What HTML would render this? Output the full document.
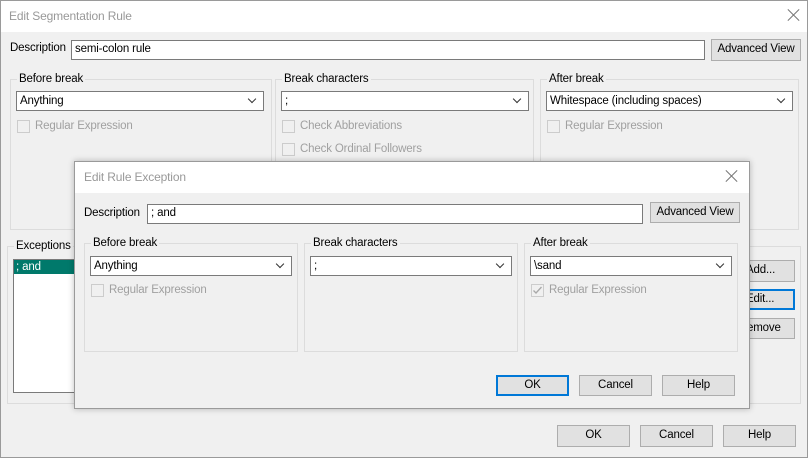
<!DOCTYPE html>
<html><head><style>
*{box-sizing:border-box;margin:0;padding:0}
body{width:808px;height:458px;background:#f0f0f0;position:relative;overflow:hidden;font-family:"Liberation Sans",sans-serif;font-size:11.5px;letter-spacing:-0.15px;color:#000}
.a{position:absolute;white-space:nowrap}
.win{border:1px solid #9a9a9a;background:#f0f0f0}
.tb{background:#fff;color:#999;font-size:12px;padding-left:8px;line-height:30px;height:31px}
.inp{background:#fff;border:1px solid #7a7a7a;padding-left:3px;line-height:17px;white-space:nowrap;overflow:hidden}
.btn{background:#e1e1e1;border:1px solid #adadad;text-align:center;line-height:19px}
.btn.f{border:2px solid #0078d7;line-height:17px}
.grp{border:1px solid #dcdcdc}
.lg{position:absolute;top:-8px;left:6px;background:#f0f0f0;padding:0 2px;line-height:14px}
.sel{background:#fff;border:1px solid #7a7a7a;padding-left:3px;line-height:18px}
.sel:after{content:"";position:absolute;right:8px;top:4px;width:5px;height:5px;border-right:1px solid #333;border-bottom:1px solid #333;transform:rotate(45deg)}
.cb{color:#a0a0a0;line-height:13px;padding-left:18px}
.cb:before{content:"";position:absolute;left:0;top:0;width:11px;height:11px;border:1px solid #ccc;background:#f0f0f0}
.x{position:absolute;width:14px;height:14px}
.x:before,.x:after{content:"";position:absolute;left:7px;top:-1px;width:1px;height:16px;background:#777}
.x:before{transform:rotate(45deg)}.x:after{transform:rotate(-45deg)}
</style></head><body>
<div class="a win" style="left:0;top:0;width:808px;height:458px">
<div class="tb">Edit Segmentation Rule</div>
</div>
<div class="x" style="left:786px;top:8px"></div>
<div class="a" style="left:10px;top:42px">Description</div>
<div class="a inp" style="left:71px;top:40px;width:634px;height:20px">semi-colon rule</div>
<div class="a btn" style="left:711px;top:39px;width:90px;height:22px">Advanced View</div>

<div class="a grp" style="left:10px;top:79px;width:262px;height:151px"><span class="lg">Before break</span></div>
<div class="a sel" style="left:16px;top:91px;width:248px;height:20px">Anything</div>
<div class="a cb" style="left:17px;top:120px">Regular Expression</div>

<div class="a grp" style="left:275px;top:79px;width:259px;height:151px"><span class="lg">Break characters</span></div>
<div class="a sel" style="left:281px;top:91px;width:248px;height:20px">;</div>
<div class="a cb" style="left:282px;top:120px">Check Abbreviations</div>
<div class="a cb" style="left:282px;top:143px">Check Ordinal Followers</div>

<div class="a grp" style="left:540px;top:79px;width:259px;height:151px"><span class="lg">After break</span></div>
<div class="a sel" style="left:546px;top:91px;width:247px;height:20px">Whitespace (including spaces)</div>
<div class="a cb" style="left:547px;top:120px">Regular Expression</div>

<div class="a grp" style="left:7px;top:246px;width:794px;height:158px"><span class="lg">Exceptions</span></div>
<div class="a" style="left:13px;top:259px;width:70px;height:134px;background:#fff;border:1px solid #7a7a7a"><div style="background:#00796b;color:#fff;line-height:14px;padding-left:2px">; and</div></div>
<div class="a btn" style="left:725px;top:260px;width:70px;height:22px;text-align:left;padding-left:20px">Add...</div>
<div class="a btn f" style="left:725px;top:289px;width:70px;height:21px;text-align:left;padding-left:19px">Edit...</div>
<div class="a btn" style="left:725px;top:318px;width:70px;height:21px;text-align:left;padding-left:21px">emove</div>

<div class="a btn" style="left:557px;top:425px;width:73px;height:22px">OK</div>
<div class="a btn" style="left:640px;top:425px;width:73px;height:22px">Cancel</div>
<div class="a btn" style="left:723px;top:425px;width:73px;height:22px">Help</div>

<div class="a win" style="left:74px;top:161px;width:676px;height:248px;box-shadow:0 0 6px rgba(0,0,0,.25)">
<div class="tb" style="line-height:30px;padding-left:9px">Edit Rule Exception</div>
</div>
<div class="x" style="left:724px;top:169px"></div>
<div class="a" style="left:84px;top:207px">Description</div>
<div class="a inp" style="left:147px;top:204px;width:496px;height:20px">; and</div>
<div class="a btn" style="left:650px;top:202px;width:90px;height:21px">Advanced View</div>

<div class="a grp" style="left:84px;top:243px;width:214px;height:109px"><span class="lg">Before break</span></div>
<div class="a sel" style="left:90px;top:256px;width:202px;height:20px">Anything</div>
<div class="a cb" style="left:91px;top:284px">Regular Expression</div>

<div class="a grp" style="left:304px;top:243px;width:214px;height:109px"><span class="lg">Break characters</span></div>
<div class="a sel" style="left:310px;top:256px;width:202px;height:20px">;</div>

<div class="a grp" style="left:524px;top:243px;width:214px;height:109px"><span class="lg">After break</span></div>
<div class="a sel" style="left:530px;top:256px;width:202px;height:20px">\sand</div>
<div class="a cb" style="left:531px;top:284px">Regular Expression</div>
<svg class="a" style="left:531px;top:284px" width="13" height="13"><path d="M2.5 6.5 L5 9 L10.5 3" fill="none" stroke="#a8a8a8" stroke-width="1.3"/></svg>

<div class="a btn f" style="left:496px;top:375px;width:73px;height:21px">OK</div>
<div class="a btn" style="left:579px;top:375px;width:73px;height:21px">Cancel</div>
<div class="a btn" style="left:662px;top:375px;width:73px;height:21px">Help</div>
</body></html>
